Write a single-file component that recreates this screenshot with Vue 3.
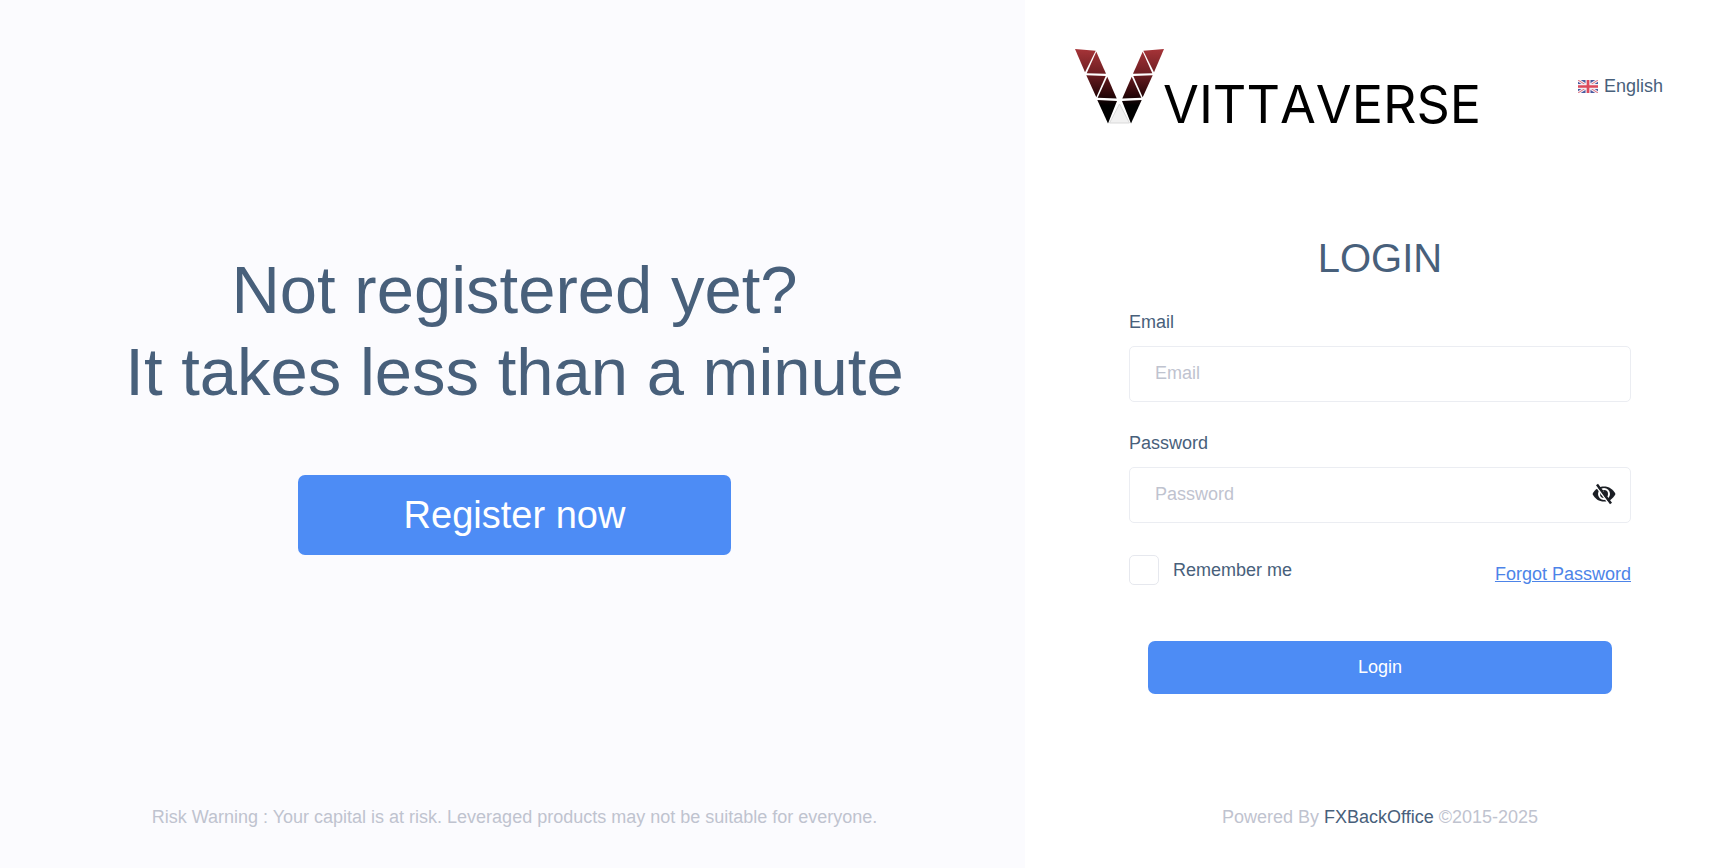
<script setup>
import { ref } from "vue";

const email = ref("");
const password = ref("");
const remember = ref(false);
const showPassword = ref(false);

const togglePassword = () => {
  showPassword.value = !showPassword.value;
};

const leftFacets = [
  "0,0 20.7,1.7 10,23.3",
  "21.3,2.7 31,24.8 11.7,24.3",
  "11.3,26.3 30.7,27 21.3,48.3",
  "32.3,27.7 41.7,49.5 22.7,48.7",
  "22.3,51 42,52 33,74.5",
];
</script>

<template>
  <div class="login-page">
    <section class="promo">
      <div class="promo-main">
        <h1>Not registered yet?<br />It takes less than a minute</h1>
        <button class="btn btn-register" type="button">Register now</button>
      </div>
      <footer class="footer">
        Risk Warning : Your capital is at risk. Leveraged products may not be
        suitable for everyone.
      </footer>
    </section>

    <section class="panel">
      <header class="panel-header">
        <svg class="logo" viewBox="0 0 412 75" role="img" aria-label="Vittaverse">
          <defs>
            <linearGradient id="facet" gradientUnits="userSpaceOnUse" x1="0" y1="0" x2="0" y2="75">
              <stop offset="0" stop-color="#a63438" />
              <stop offset="0.3" stop-color="#732024" />
              <stop offset="0.6" stop-color="#2c0709" />
              <stop offset="0.75" stop-color="#000" />
            </linearGradient>
          </defs>
          <g fill="url(#facet)">
            <polygon v-for="points in leftFacets" :key="points" :points="points" />
          </g>
          <g fill="url(#facet)" transform="translate(89 0) scale(-1 1)">
            <polygon v-for="points in leftFacets" :key="points" :points="points" />
          </g>
          <polygon points="44.5,55 54.5,74 34.5,74" fill="#f1f1f1" stroke="#d9d9d9" />
          <text x="88" y="74">VITTAVERSE</text>
        </svg>
        <button class="language" type="button">
          <svg viewBox="0 0 60 39" width="20" height="13" aria-hidden="true">
            <path fill="#4a5a9f" d="M0 0h60v39H0z" />
            <path stroke="#f3eef4" stroke-width="9" d="M0 0l60 39M60 0L0 39" />
            <path stroke="#e0717f" stroke-width="3" d="M0 0l60 39M60 0L0 39" />
            <path stroke="#f3eef4" stroke-width="15" d="M30 0v39M0 19.500h60" />
            <path stroke="#dd4a5c" stroke-width="8" d="M30 0v39M0 19.500h60" />
          </svg>
          English
        </button>
      </header>

      <form class="form" @submit.prevent>
        <h2>LOGIN</h2>
        <div class="field">
          <label for="email">Email</label>
          <input id="email" v-model="email" type="email" placeholder="Email" />
        </div>
        <div class="field">
          <label for="password">Password</label>
          <div class="password">
            <input
              id="password"
              v-model="password"
              :type="showPassword ? 'text' : 'password'"
              placeholder="Password"
            />
            <button type="button" aria-label="Show password" @click="togglePassword">
              <svg viewBox="0 0 24 22" width="24" height="22" aria-hidden="true">
                <path fill="#1b1e24" d="M.5 11C3 6 7 3.500 12 3.500S21 6 23.500 11C21 16 17 18.500 12 18.500S3 16 .5 11z" />
                <circle cx="12" cy="11" r="5" fill="#1b1e24" stroke="#fff" stroke-width="2" />
                <path fill="none" stroke="#fff" stroke-width="1.500" d="M9.500 11.500a2.500 2.500 0 0 1 2.500-3" />
                <path stroke="#fff" stroke-width="1.500" d="M3.500 2.500l14 19" />
                <path stroke="#1b1e24" stroke-width="2.500" d="M5 1.500l14 19" />
              </svg>
            </button>
          </div>
        </div>
        <div class="options">
          <label class="remember">
            <input v-model="remember" type="checkbox" />
            Remember me
          </label>
          <a href="#">Forgot Password</a>
        </div>
        <button class="btn btn-login" type="submit">Login</button>
      </form>

      <footer class="footer">
        Powered By <a href="#">FXBackOffice</a> ©2015-2025
      </footer>
    </section>
  </div>
</template>

<style>
body {
  margin: 0;
}
</style>

<style scoped>
.login-page {
  display: grid;
  grid-template-columns: 1025fr 706fr;
  min-height: 100vh;
  color: #48607b;
  font-family: "Liberation Sans", Arial, sans-serif;
  font-size: 18px;
  line-height: 27px;
}

.login-page * {
  box-sizing: border-box;
}

.promo,
.panel {
  display: flex;
  flex-direction: column;
  padding-left: 4px;
}

.promo {
  background-color: #fbfbfe;
}

.panel {
  background-color: #fff;
}

.promo-main {
  flex: 1;
  display: flex;
  flex-direction: column;
  align-items: center;
  justify-content: center;
  gap: 62px;
}

h1,
h2 {
  margin: 0;
  font-weight: 400;
  text-align: center;
}

h1 {
  font-size: 67px;
  line-height: 82px;
}

h2 {
  margin-bottom: 26px;
  font-size: 40px;
  line-height: 50px;
}

button,
input {
  font: inherit;
}

button {
  padding: 0;
  border: 0;
  background: none;
  color: inherit;
  cursor: pointer;
}

.btn {
  border-radius: 7px;
  background-color: #4d8cf5;
  color: #fff;
}

.btn-register {
  padding: 16px 106px;
  font-size: 38px;
  line-height: 48px;
}

.btn-login {
  margin: 56px 19px 0;
  padding: 13px;
}

.footer {
  padding-bottom: 37px;
  color: #bfc3cf;
  text-align: center;
}

.footer a {
  color: #48607b;
  text-decoration: none;
}

.panel-header {
  display: flex;
  align-items: center;
  justify-content: space-between;
  padding: 49px 68px 0 46px;
}

.logo {
  width: 412px;
  height: 75px;
  overflow: visible;
}

.logo text {
  font-family: Inter, sans-serif;
  font-size: 52px;
  font-kerning: none;
}

.language {
  display: flex;
  align-items: center;
  gap: 6px;
}

.form {
  flex: 1;
  display: flex;
  flex-direction: column;
  padding: 109px 100px 32px;
}

.field {
  display: flex;
  flex-direction: column;
  gap: 10px;
  margin-bottom: 28px;
}

.field input {
  width: 100%;
  height: 56px;
  padding: 0 25px 2px;
  border: 1px solid #ebedf2;
  border-radius: 5px;
  background-color: #fff;
  color: #48607b;
}

.field input::placeholder {
  color: #bfc3cf;
}

.password {
  position: relative;
}

.password button {
  position: absolute;
  top: 0;
  right: 15px;
  display: flex;
  align-items: center;
  height: 100%;
  padding-bottom: 2px;
}

.options {
  display: flex;
  align-items: flex-end;
  justify-content: space-between;
  padding-top: 4px;
}

.options a {
  color: #4d84e8;
  line-height: 21px;
}

.remember {
  display: flex;
  align-items: center;
  gap: 14px;
}

.remember input {
  width: 30px;
  height: 30px;
  margin: 0;
  border: 1px solid #e6e8ee;
  border-radius: 5px;
  appearance: none;
}

.remember input:checked {
  background-color: #4d8cf5;
}
</style>
